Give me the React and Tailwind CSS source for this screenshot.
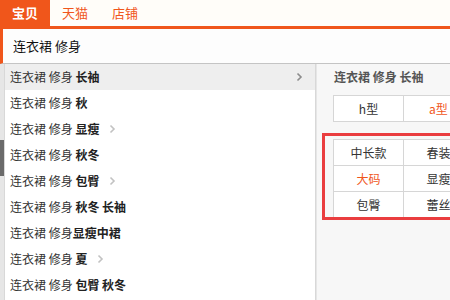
import React from "react";

const ORANGE = "text-[#f0561b]";

const rows = [
  { bold: "长袖", arrow: "big", active: true },
  { bold: "秋" },
  { bold: "显瘦", arrow: "small" },
  { bold: "秋冬" },
  { bold: "包臀", arrow: "small" },
  { bold: "秋冬 长袖" },
  { bold: "显瘦中裙", tight: true },
  { bold: "夏", arrow: "small" },
  { bold: "包臀 秋冬" },
];

const Chevron = ({ className }) => (
  <svg width="7" height="10" viewBox="0 0 7 10" className={className}>
    <path d="M1.5 1.5 L5 5 L1.5 8.5" fill="none" stroke="currentColor" strokeWidth="1.6" />
  </svg>
);

const SuggestRow = ({ row }) => (
  <div
    className={`h-[26px] flex items-center pl-[5px] pr-[12px] text-[12px] ${
      row.active ? "bg-[#eeeeee]" : ""
    }`}
  >
    <span className="whitespace-pre text-[#333]">
      {row.tight ? "连衣裙 修身" : "连衣裙 修身 "}
      <b className="font-bold text-[#222]">{row.bold}</b>
    </span>
    {row.arrow === "small" && <Chevron className="ml-[10px] text-[#c2c2c2]" />}
    {row.arrow === "big" && <Chevron className="ml-auto text-[#8c8c8c]" />}
  </div>
);

const Cell = ({ children, orange }) => (
  <div
    className={`w-[70px] h-full flex items-center justify-center border-r border-[#d6d6d6] ${
      orange ? ORANGE : "text-[#333]"
    }`}
  >
    {children}
  </div>
);

export default function App() {
  return (
    <div
      className="w-[450px] h-[300px] overflow-hidden bg-white"
      style={{ fontFamily: '"Noto Sans CJK SC", "Noto Sans", sans-serif' }}
    >
      {/* tabs */}
      <div className="flex h-[26px] bg-[#fffdf9] text-[13px]">
        <div className="w-[50px] flex items-center justify-center bg-[#f0561b] text-white font-bold">宝贝</div>
        <div className={`w-[50px] flex items-center justify-center ${ORANGE}`}>天猫</div>
        <div className={`w-[50px] flex items-center justify-center ${ORANGE}`}>店铺</div>
      </div>
      <div className="h-[3px] bg-[#f0561b]" />

      {/* search box */}
      <div className="h-[35px] flex items-center pl-[10px] border-l-[3px] border-l-[#f0561b] border-b border-b-[#c4c4c4] bg-[#fdfdfd] text-[13px] text-[#111] whitespace-pre">
        连衣裙 修身
      </div>

      <div className="flex h-[236px]">
        {/* page behind */}
        <div className="w-[4px] flex flex-col bg-[#e6e6e6]">
          <div className="h-[76px]" />
          <div className="h-[36px] bg-[#6a6a6a]" />
        </div>

        {/* suggestion list */}
        <div className="w-[312px] border-l border-r border-[#d8d8d8] bg-white">
          {rows.map((r, i) => (
            <SuggestRow key={i} row={r} />
          ))}
        </div>

        {/* right panel */}
        <div className="flex-1 overflow-hidden bg-[#f7f7f7] border-l border-[#e6e6e6] text-[12px]">
          <div className="h-[26px] flex items-center pl-[17px] font-bold text-[#555] whitespace-pre">连衣裙 修身 长袖</div>
          <div className="ml-[16px] mt-[5px] w-[160px] h-[27px] flex border border-[#d6d6d6] bg-white">
            <Cell>h型</Cell>
            <Cell orange>a型</Cell>
          </div>
          <div className="ml-[5px] mt-[11px] w-[180px] border-[3px] border-[#ea3d3f] pl-[8px] pt-[3px]">
            <div className="w-[170px] border-l border-t border-[#d6d6d6] bg-white">
              <div className="h-[26px] flex border-b border-[#d6d6d6]">
                <Cell>中长款</Cell>
                <Cell>春装</Cell>
              </div>
              <div className="h-[26px] flex border-b border-[#d6d6d6]">
                <Cell orange>大码</Cell>
                <Cell>显瘦</Cell>
              </div>
              <div className="h-[25px] flex">
                <Cell>包臀</Cell>
                <Cell>蕾丝</Cell>
              </div>
            </div>
          </div>
        </div>
      </div>
    </div>
  );
}
